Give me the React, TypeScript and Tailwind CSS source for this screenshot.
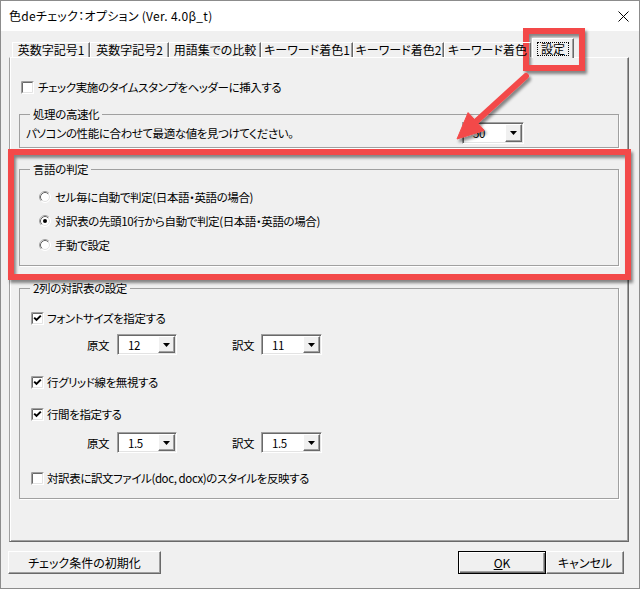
import type { ReactNode } from "react";

const FONT = "font-['Noto_Sans_CJK_JP','Noto_Sans',sans-serif] [font-feature-settings:'palt']";

function Check({ checked }: { checked?: boolean }) {
  return (
    <svg width="13" height="13" viewBox="0 0 13 13" className="shrink-0">
      <rect x="0" y="0" width="13" height="13" fill="#fff" />
      <path d="M0.5 12.5H12.5V0.5" stroke="#ffffff" fill="none" />
      <path d="M1.5 11.5H11.5V1.5" stroke="#e3e3e3" fill="none" />
      <path d="M0.5 12.5V0.5H12.5" stroke="#a0a0a0" fill="none" />
      <path d="M1.5 11.5V1.5H11.5" stroke="#696969" fill="none" />
      {checked && <path d="M3.2 5.6l2.3 2.3 4.3-4.3" stroke="#000" strokeWidth="2" fill="none" />}
    </svg>
  );
}

function Radio({ checked }: { checked?: boolean }) {
  return (
    <svg width="12" height="12" viewBox="0 0 12 12" className="shrink-0">
      <circle cx="6" cy="6" r="5.5" fill="#fff" stroke="#ffffff" />
      <path d="M2.11 9.89A5.5 5.5 0 0 1 9.89 2.11" stroke="#a0a0a0" fill="none" />
      <circle cx="6" cy="6" r="4.5" fill="#fff" stroke="#e3e3e3" />
      <path d="M2.82 9.18A4.5 4.5 0 0 1 9.18 2.82" stroke="#696969" fill="none" />
      {checked && <circle cx="6" cy="6" r="2" fill="#000" />}
    </svg>
  );
}

function Combo({ value, className }: { value: string; className: string }) {
  return (
    <div
      className={`${className} flex border border-t-[#a0a0a0] border-l-[#a0a0a0] border-r-white border-b-white shadow-[inset_1px_1px_0_#696969,inset_-1px_-1px_0_#e3e3e3] bg-white p-[1px]`}
    >
      <div className="flex-1 flex items-center pl-[9px] leading-[14px]">{value}</div>
      <div className="w-[17px] flex items-center justify-center bg-[#f0f0f0] border border-t-white border-l-white border-r-[#696969] border-b-[#696969] shadow-[inset_-1px_-1px_0_#a0a0a0]">
        <svg width="7" height="4" viewBox="0 0 7 4">
          <path d="M0 0H7L3.5 4Z" fill="#000" />
        </svg>
      </div>
    </div>
  );
}

function Group({ title, className, children }: { title: string; className: string; children: ReactNode }) {
  return (
    <fieldset className={`w-[600px] border border-[#a0a0a0] shadow-[1px_1px_0_#fff] ${className}`}>
      <legend className="ml-[10px] px-[3px] leading-[16px]">{title}</legend>
      {children}
    </fieldset>
  );
}

function Tab({ label, className }: { label: string; className: string }) {
  return (
    <div
      className={`${className} mt-[4px] h-[15px] flex items-center justify-center border-l border-t border-l-white border-t-white border-r border-r-[#696969] shadow-[inset_-1px_0_0_#a0a0a0] leading-[14px] whitespace-nowrap overflow-hidden`}
    >
      {label}
    </div>
  );
}

function Btn({ children, className }: { children: ReactNode; className: string }) {
  return (
    <div className={`${className} h-[23px] flex items-center justify-center bg-[#f0f0f0]`}>{children}</div>
  );
}

export default function App() {
  return (
    <div
      className={`relative w-[640px] h-[589px] flex flex-col border border-[#8c8c8c] bg-[#f0f0f0] text-black text-[12px] leading-[16px] ${FONT}`}
    >
      {/* title bar */}
      <div className="h-[30px] shrink-0 bg-white flex items-center justify-between pl-[8px] pr-[10px]">
        <span className="text-[12px] tracking-[0.3px]">色deチェック：オプション (Ver. 4.0β_t)</span>
        <svg width="11" height="11" viewBox="0 0 11 11">
          <path d="M0.5 0.5L10.5 10.5M10.5 0.5L0.5 10.5" stroke="#000" strokeWidth="1" />
        </svg>
      </div>

      <div className="flex-1 flex flex-col pl-[8px] pt-[7px]">
        {/* tabs */}
        <div className="relative z-10 flex items-start h-[20px] -mb-[1px] pl-[3px]">
          <Tab label="英数字記号1" className="w-[78px]" />
          <Tab label="英数字記号2" className="w-[79px]" />
          <Tab label="用語集での比較" className="w-[92px]" />
          <Tab label="キーワード着色1" className="w-[92px]" />
          <Tab label="キーワード着色2" className="w-[91px]" />
          <Tab label="キーワード着色" className="w-[87px]" />
          <div className="ml-[1px] w-[42px] h-[20px] flex justify-center pt-[3px] bg-[#f0f0f0] border-l border-t border-l-white border-t-white border-r border-r-[#696969] shadow-[inset_-1px_0_0_#a0a0a0]">
            <span className="h-[14px] border border-dotted border-black px-[3px] leading-[12px]">設定</span>
          </div>
        </div>

        {/* panel */}
        <div className="w-[620px] h-[485px] shrink-0 flex flex-col pl-[9px] text-[11.5px] tracking-[-0.4px] border border-t-white border-l-[#a0a0a0] border-r-[#696969] border-b-[#696969] shadow-[inset_1px_0_0_#fff,inset_-1px_-1px_0_#a0a0a0]">
          <div className="mt-[21px] ml-[2px] h-[16px] flex items-center gap-[4px]">
            <Check />
            <span>チェック実施のタイムスタンプをヘッダーに挿入する</span>
          </div>

          <Group title="処理の高速化" className="mt-[11px] pb-[3px]">
            <div className="h-[22px] flex items-center pl-[6px]">
              <span>パソコンの性能に合わせて最適な値を見つけてください。</span>
              <Combo value="50" className="ml-auto mr-[94px] w-[62px] h-[22px]" />
            </div>
          </Group>

          <Group title="言語の判定" className="mt-[13px] pt-[12px] pb-[12px]">
            <div className="flex flex-col gap-[8px] pl-[19px]">
              <div className="h-[16px] flex items-center gap-[4px]">
                <Radio />
                <span>セル毎に自動で判定(日本語・英語の場合)</span>
              </div>
              <div className="h-[16px] flex items-center gap-[4px]">
                <Radio checked />
                <span>対訳表の先頭10行から自動で判定(日本語・英語の場合)</span>
              </div>
              <div className="h-[16px] flex items-center gap-[4px]">
                <Radio />
                <span>手動で設定</span>
              </div>
            </div>
          </Group>

          <Group title="2列の対訳表の設定" className="mt-[14px] pt-[14px] pb-[12px]">
            <div className="flex flex-col">
              <div className="h-[16px] flex items-center gap-[3px] pl-[11px]">
                <Check checked />
                <span>フォントサイズを指定する</span>
              </div>
              <div className="mt-[8px] h-[21px] flex items-center pl-[67px]">
                <span className="w-[24px]">原文</span>
                <Combo value="12" className="ml-[6px] w-[60px] h-[21px]" />
                <span className="ml-[55px] w-[24px]">訳文</span>
                <Combo value="11" className="ml-[5px] w-[61px] h-[21px]" />
              </div>
              <div className="mt-[19px] h-[16px] flex items-center gap-[3px] pl-[11px]">
                <Check checked />
                <span>行グリッド線を無視する</span>
              </div>
              <div className="mt-[16px] h-[16px] flex items-center gap-[3px] pl-[11px]">
                <Check checked />
                <span>行間を指定する</span>
              </div>
              <div className="mt-[10px] h-[21px] flex items-center pl-[67px]">
                <span className="w-[24px]">原文</span>
                <Combo value="1.5" className="ml-[6px] w-[60px] h-[21px]" />
                <span className="ml-[55px] w-[24px]">訳文</span>
                <Combo value="1.5" className="ml-[5px] w-[61px] h-[21px]" />
              </div>
              <div className="mt-[17px] h-[16px] flex items-center gap-[3px] pl-[11px]">
                <Check />
                <span>対訳表に訳文ファイル(doc, docx)のスタイルを反映する</span>
              </div>
            </div>
          </Group>
        </div>

        {/* buttons */}
        <div className="mt-[9px] flex mr-[15px] -ml-[1px]">
          <Btn className="w-[153px] border border-t-white border-l-white border-r-[#696969] border-b-[#696969] shadow-[inset_-1px_-1px_0_#a0a0a0]">
            チェック条件の初期化
          </Btn>
          <Btn className="ml-auto w-[88px] border border-black shadow-[inset_1px_1px_0_#fff,inset_-1px_-1px_0_#696969,inset_-2px_-2px_0_#a0a0a0]">
            <span>
              <span className="underline">O</span>K
            </span>
          </Btn>
          <Btn className="w-[78px] border border-t-white border-l-white border-r-[#696969] border-b-[#696969] shadow-[inset_-1px_-1px_0_#a0a0a0]">
            キャンセル
          </Btn>
        </div>
      </div>

      {/* annotation overlay */}
      <svg
        className="absolute left-[-1px] top-[-1px] pointer-events-none"
        width="640"
        height="589"
        viewBox="0 0 640 589"
      >
        <defs>
          <filter id="sh" x="-10%" y="-10%" width="120%" height="130%">
            <feDropShadow dx="2" dy="3" stdDeviation="1.6" floodColor="#000" floodOpacity="0.45" />
          </filter>
        </defs>
        <g filter="url(#sh)" fill="none" stroke="#f34a4a" strokeWidth="6">
          <rect x="526" y="31" width="56" height="37" />
          <rect x="11" y="152" width="617" height="125" />
          <path d="M526 76L476 121.5" strokeLinecap="round" />
          <path d="M457 139L484.3 130.4L468.1 112.6Z" fill="#f34a4a" strokeWidth="1" />
        </g>
      </svg>
    </div>
  );
}
